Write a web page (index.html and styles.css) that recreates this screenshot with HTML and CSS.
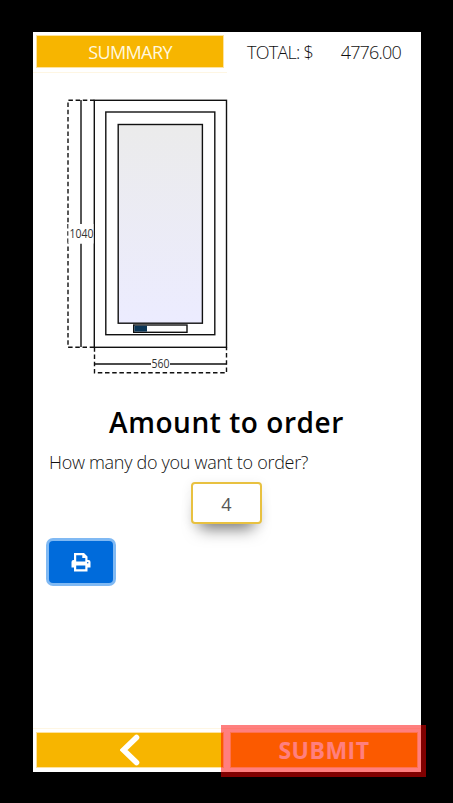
FILE: index.html
```
<!DOCTYPE html>
<html lang="en">
<head>
<meta charset="utf-8">
<title>Order amount</title>
<link rel="stylesheet" href="styles.css">
</head>
<body>
<div class="app">
  <header class="header">
    <div class="cell"><button class="bar-button"><span class="summary-label">SUMMARY</span></button></div>
    <div class="total"><span class="total-label">TOTAL: $</span><span class="total-value">4776.00</span></div>
  </header>
  <main class="content">
    <svg class="drawing" width="170" height="284" viewBox="63 95 170 284">
      <defs>
        <linearGradient id="glass" x1="0" y1="0" x2="0" y2="1">
          <stop offset="0" stop-color="#ebebeb"/>
          <stop offset="1" stop-color="#ececff"/>
        </linearGradient>
      </defs>
      <g fill="none" stroke="#111" stroke-width="1.4">
        <path d="M94.5 100.3H68V347.3H94.5M94.5 347.3V372.8H226.5V347.3" stroke-dasharray="4.5 2.7"/>
        <path d="M81 100V224M81 243.5V347M94.5 364H151M170 364H226.5"/>
        <rect x="94.3" y="100.3" width="132.2" height="247"/>
        <rect x="105.8" y="112" width="109" height="222.7"/>
        <rect x="118.2" y="124.5" width="84.2" height="198.7" fill="url(#glass)"/>
        <rect x="133.7" y="325" width="53.3" height="7.3" fill="#fff"/>
      </g>
      <path d="M134.4 325.7H147V331.6H134.4Z" fill="#0b3556"/>
      <path d="M67 224H93.5V243.5H67Z" fill="#fff"/>
      <path d="M67.8 224V243.5" stroke="#111" stroke-dasharray="4.5 2.7"/>
      <text x="69.4" y="238" textLength="24" lengthAdjust="spacingAndGlyphs">1040</text>
      <text x="151.5" y="368" textLength="18" lengthAdjust="spacingAndGlyphs">560</text>
    </svg>
    <h1 class="title">Amount to order</h1>
    <p class="question">How many do you want to order?</p>
    <input class="amount" type="text" value="4" aria-label="Amount">
    <button class="print" aria-label="Print">
      <svg width="20" height="20" viewBox="0 0 20 20">
        <path fill="#fff" fill-rule="evenodd" d="M3 1H13L16.500 4.500V8H17.500Q19.500 8 19.500 10V15.500H16.500V19.500H3V15.500H.500V10Q.500 8 2.500 8H3ZM5.200 3.200V9.600H14.300V6H11.300V3.200ZM5.200 13.500V17.200H14.300V13.500Z"/>
        <circle cx="16.700" cy="10.800" r=".8" fill="#006bdb"/>
      </svg>
    </button>
  </main>
  <footer class="footer">
    <div class="cell">
      <button class="bar-button" aria-label="Back">
        <svg width="20" height="32" viewBox="0 0 20 32"><path d="M16.500 3.500L3.500 16L16.500 28.500" fill="none" stroke="#fff" stroke-width="5.600" stroke-linecap="round" stroke-linejoin="miter"/></svg>
      </button>
    </div>
    <div class="cell submit-cell">
      <button class="bar-button"><span class="submit-label">SUBMIT</span></button>
      <span class="highlight"></span>
    </div>
  </footer>
</div>
</body>
</html>
```
FILE: styles.css
```
* { box-sizing: border-box; }
body {
  margin: 0;
  height: 803px;
  padding: 32px 32px 31px 33px;
  background: #000;
  color: #414141;
  font-family: "Open Sans", "Noto Sans", sans-serif;
  font-size: 18px;
}
.app {
  display: flex;
  flex-direction: column;
  height: 740px;
  background: #fff;
}
.header { display: grid; grid-template-columns: 194px 194px; height: 40px; }
.cell { padding: 3px 3px 4px; }
.header .cell { border-bottom: 1px solid #fef6e3; }
.bar-button {
  display: flex;
  align-items: center;
  justify-content: center;
  width: 100%;
  height: 100%;
  padding: 0;
  border: 1px solid #fde3a0;
  background: #f7b500;
  background-clip: padding-box;
  color: #fff;
  font: inherit;
}
.header .bar-button { height: 33px; }
.summary-label { letter-spacing: -0.6px; color: #fff8df; }
.total {
  display: flex;
  justify-content: space-between;
  align-items: center;
  padding: 0 20px 1px 20px;
}
.total-label { letter-spacing: -0.75px; }
.total-value { letter-spacing: -0.8px; }
.content { flex: 1; display: flex; flex-direction: column; padding: 23px 17px 0 16px; }
.total, .question { font-weight: 300; color: #111; }
.drawing { margin-left: 14px; flex: none; }
.drawing text { font-size: 12px; fill: #333; }
.title {
  margin: 25px 0 0;
  color: #000;
  font-size: 28px;
  font-weight: 600;
  line-height: 36px;
  letter-spacing: 0.55px;
  text-align: center;
  white-space: nowrap;
}
.question { margin: 9px 0 0; line-height: 26px; letter-spacing: -0.3px; white-space: nowrap; }
.amount {
  align-self: center;
  width: 71px;
  height: 42px;
  margin-top: 7px;
  padding: 2px 0 0;
  border: 2px solid #e8c140;
  border-radius: 4px;
  background: #fff;
  box-shadow: 0 14px 16px -9px rgba(0, 0, 0, 0.5), 0 2px 12px rgba(0, 0, 0, 0.08);
  color: #555;
  font: inherit;
  text-align: center;
}
.print {
  display: flex;
  align-items: center;
  justify-content: center;
  width: 64px;
  height: 42px;
  margin-top: 17px;
  padding: 0;
  border: 0;
  border-radius: 4px;
  background: #006bdb;
  box-shadow: 0 0 0 3px #80b9f3;
}
.footer { display: grid; grid-template-columns: 194px 194px; height: 44px; }
.footer .cell { border-top: 1px solid #fef6e3; }
.submit-cell { position: relative; }
.submit-label { font-size: 23px; font-weight: 700; letter-spacing: 0.5px; }
.highlight {
  position: absolute;
  top: -4px;
  right: -5px;
  bottom: -5px;
  left: -6px;
  background: rgba(255, 0, 0, 0.5);
}
```
